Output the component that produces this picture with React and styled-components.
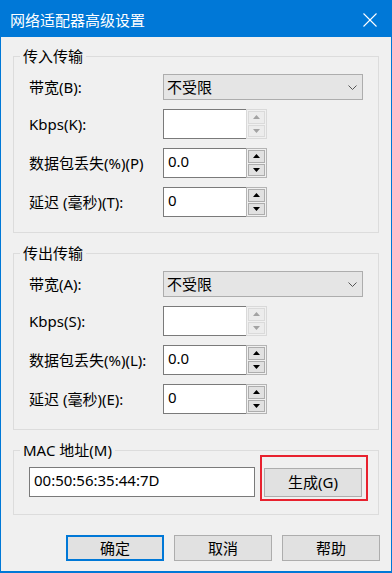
import React from "react";
import styled, { createGlobalStyle } from "styled-components";

const GlobalStyle = createGlobalStyle`
  html, body { margin: 0; padding: 0; background: #f0f0f0; }
  body {
    font-family: "Noto Sans", "Noto Sans CJK SC", sans-serif;
    font-size: 15px;
    color: #000;
  }
  * { box-sizing: border-box; }
`;

const Window = styled.div`
  width: 392px;
  height: 573px;
  border: 1px solid #0078d7;
  border-top: 0;
  border-bottom-width: 2px;
  background: #f0f0f0;
  display: flex;
  flex-direction: column;
`;

const TitleBar = styled.div`
  height: 37px;
  flex: none;
  background: #0078d7;
  color: #fff;
  display: flex;
  align-items: center;
  justify-content: space-between;
  padding: 2px 14px 0 9px;
  font-family: "Noto Sans CJK SC", sans-serif;
  font-size: 15px;
  line-height: 20px;
`;

const Content = styled.div`
  padding: 9px 12px 0 12px;
  display: flex;
  flex-direction: column;
  gap: 10px;
`;

const Group = styled.fieldset`
  margin: 0;
  padding: 0;
  min-width: 0;
  border: 1px solid #dcdcdc;
`;

const Legend = styled.legend`
  margin-left: 6px;
  padding: 0 3px;
  line-height: 20px;
  height: 20px;
`;

const GroupBody = styled.div`
  padding: ${(p) => p.$pt}px 15px ${(p) => p.$pb}px 15px;
  display: flex;
  flex-direction: column;
  gap: 9px;
`;

const Row = styled.div`
  display: flex;
  align-items: center;
`;

const Label = styled.label`
  width: 134px;
  flex: none;
  line-height: 20px;
  white-space: nowrap;
`;

const Combo = styled.div`
  width: 200px;
  height: 26px;
  background: #e5e5e5;
  border: 1px solid #adadad;
  display: flex;
  align-items: center;
  justify-content: space-between;
  padding: 0 5px 0 3px;
  line-height: 20px;
`;

const SpinField = styled.div`
  display: flex;
  height: 30px;
`;

const TextBox = styled.div`
  width: ${(p) => p.$w}px;
  height: 30px;
  background: #fff;
  border: 1px solid #7a7a7a;
  border-right: ${(p) => (p.$joined ? "none" : "1px solid #7a7a7a")};
  padding: 2px 4px 0 4px;
  line-height: 20px;
  white-space: nowrap;
`;

const Spin = styled.div`
  width: 21px;
  height: 30px;
  border: 1px solid ${(p) => (p.$disabled ? "#d9d9d9" : "#b4b4b4")};
  background: #f0f0f0;
  padding: 1px;
  display: flex;
  flex-direction: column;
  gap: 1px;
`;

const SpinBtn = styled.div`
  flex: 1;
  display: flex;
  align-items: center;
  justify-content: center;
  background: ${(p) => (p.$disabled ? "#ececec" : "#e1e1e1")};
  border: 1px solid ${(p) => (p.$disabled ? "#dadada" : "#adadad")};
  svg { display: block; }
`;

const MacRow = styled.div`
  display: flex;
  align-items: center;
  gap: 9px;
`;

const Button = styled.button`
  width: 98px;
  height: ${(p) => p.$h || 26}px;
  margin: 0;
  padding: 0;
  background: #e1e1e1;
  border: ${(p) => (p.$primary ? "2px solid #0078d7" : "1px solid #adadad")};
  font: inherit;
  line-height: 20px;
  color: #000;
  display: flex;
  align-items: center;
  justify-content: center;
`;

const Highlight = styled.div`
  position: relative;
  &::after {
    content: "";
    position: absolute;
    top: -13px;
    left: -4px;
    right: -6px;
    bottom: -4px;
    border: 2px solid #e8212e;
    pointer-events: none;
  }
`;

const Footer = styled.div`
  margin-top: 20px;
  padding-right: 11px;
  display: flex;
  justify-content: flex-end;
  gap: 10px;
`;

const Arrow = ({ up, color }) => (
  <svg width="7" height="4" viewBox="0 0 7 4">
    {up ? (
      <polygon points="0,4 7,4 3.5,0" fill={color} />
    ) : (
      <polygon points="0,0 7,0 3.5,4" fill={color} />
    )}
  </svg>
);

const Chevron = () => (
  <svg width="9" height="5" viewBox="0 0 9 5">
    <polyline points="0.5,0.5 4.5,4.5 8.5,0.5" fill="none" stroke="#555" strokeWidth="1" />
  </svg>
);

const CloseIcon = () => (
  <svg width="14" height="14" viewBox="0 0 14 14">
    <line x1="0.5" y1="0.5" x2="13.5" y2="13.5" stroke="#fff" strokeWidth="1.1" />
    <line x1="13.5" y1="0.5" x2="0.5" y2="13.5" stroke="#fff" strokeWidth="1.1" />
  </svg>
);

const SpinInput = ({ value, disabled }) => {
  const c = disabled ? "#a3a3a3" : "#000";
  return (
    <SpinField>
      <TextBox $w={83} $joined>
        {value}
      </TextBox>
      <Spin $disabled={disabled}>
        <SpinBtn $disabled={disabled}>
          <Arrow up color={c} />
        </SpinBtn>
        <SpinBtn $disabled={disabled}>
          <Arrow color={c} />
        </SpinBtn>
      </Spin>
    </SpinField>
  );
};

const TransferGroup = ({ title, bw, kbps, loss, delay }) => (
  <Group>
    <Legend>{title}</Legend>
    <GroupBody $pt={8} $pb={15}>
      <Row>
        <Label>{bw}</Label>
        <Combo>
          <span>不受限</span>
          <Chevron />
        </Combo>
      </Row>
      <Row>
        <Label>{kbps}</Label>
        <SpinInput value="" disabled />
      </Row>
      <Row>
        <Label>{loss}</Label>
        <SpinInput value="0.0" />
      </Row>
      <Row>
        <Label>{delay}</Label>
        <SpinInput value="0" />
      </Row>
    </GroupBody>
  </Group>
);

export default function App() {
  return (
    <>
      <GlobalStyle />
      <Window>
        <TitleBar>
          <span>网络适配器高级设置</span>
          <CloseIcon />
        </TitleBar>
        <Content>
          <TransferGroup
            title="传入传输"
            bw="带宽(B):"
            kbps="Kbps(K):"
            loss="数据包丢失(%)(P)"
            delay="延迟 (毫秒)(T):"
          />
          <TransferGroup
            title="传出传输"
            bw="带宽(A):"
            kbps="Kbps(S):"
            loss="数据包丢失(%)(L):"
            delay="延迟 (毫秒)(E):"
          />
          <Group>
            <Legend>MAC 地址(M)</Legend>
            <GroupBody $pt={7} $pb={17}>
              <MacRow>
                <TextBox $w={226}>00:50:56:35:44:7D</TextBox>
                <Highlight>
                  <Button $h={29}>生成(G)</Button>
                </Highlight>
              </MacRow>
            </GroupBody>
          </Group>
        </Content>
        <Footer>
          <Button $primary>确定</Button>
          <Button>取消</Button>
          <Button>帮助</Button>
        </Footer>
      </Window>
    </>
  );
}
